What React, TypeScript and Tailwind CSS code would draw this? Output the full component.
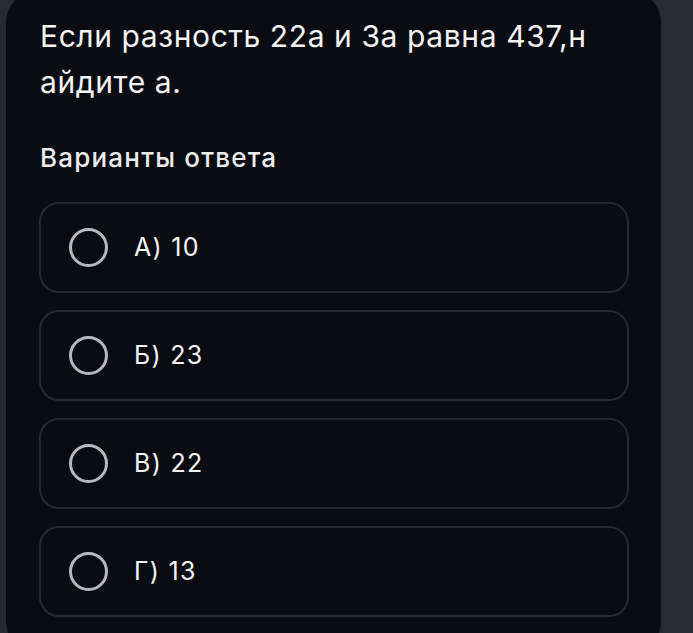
import React from "react";

const options = ["А) 10", "Б) 23", "В) 22", "Г) 13"];

export default function App() {
  return (
    <div
      className="w-[693px] h-[633px] overflow-hidden bg-[#252a35] pl-[6px]"
      style={{ fontFamily: "Inter, 'Noto Sans', sans-serif" }}
    >
      <div className="w-[655px] h-[660px] -mt-[8px] rounded-[30px] bg-[#0a0c11] pt-[21px] pl-[33px] pr-[32px]">
        <div className="text-[30px] leading-[46px] tracking-[0.6px] text-[#f4f4f6] pl-[1px]">
          Если разность 22а и 3а равна 437,н
          <br />
          айдите а.
        </div>
        <div className="mt-[36px] text-[26px] leading-[33px] tracking-[1.2px] font-medium text-[#ececef] pl-[1px]">
          Варианты ответа
        </div>
        <div className="mt-[28px] flex flex-col gap-[17px]">
          {options.map((o) => (
            <div
              key={o}
              className="h-[91px] rounded-[20px] border-2 border-[#252932] flex items-center pl-[28px]"
            >
              <div className="w-[39px] h-[39px] rounded-full border-[3px] border-[#b6b8bd]" />
              <span className="ml-[26px] text-[25px] tracking-[1.3px] text-[#f4f4f6]">{o}</span>
            </div>
          ))}
        </div>
      </div>
    </div>
  );
}
